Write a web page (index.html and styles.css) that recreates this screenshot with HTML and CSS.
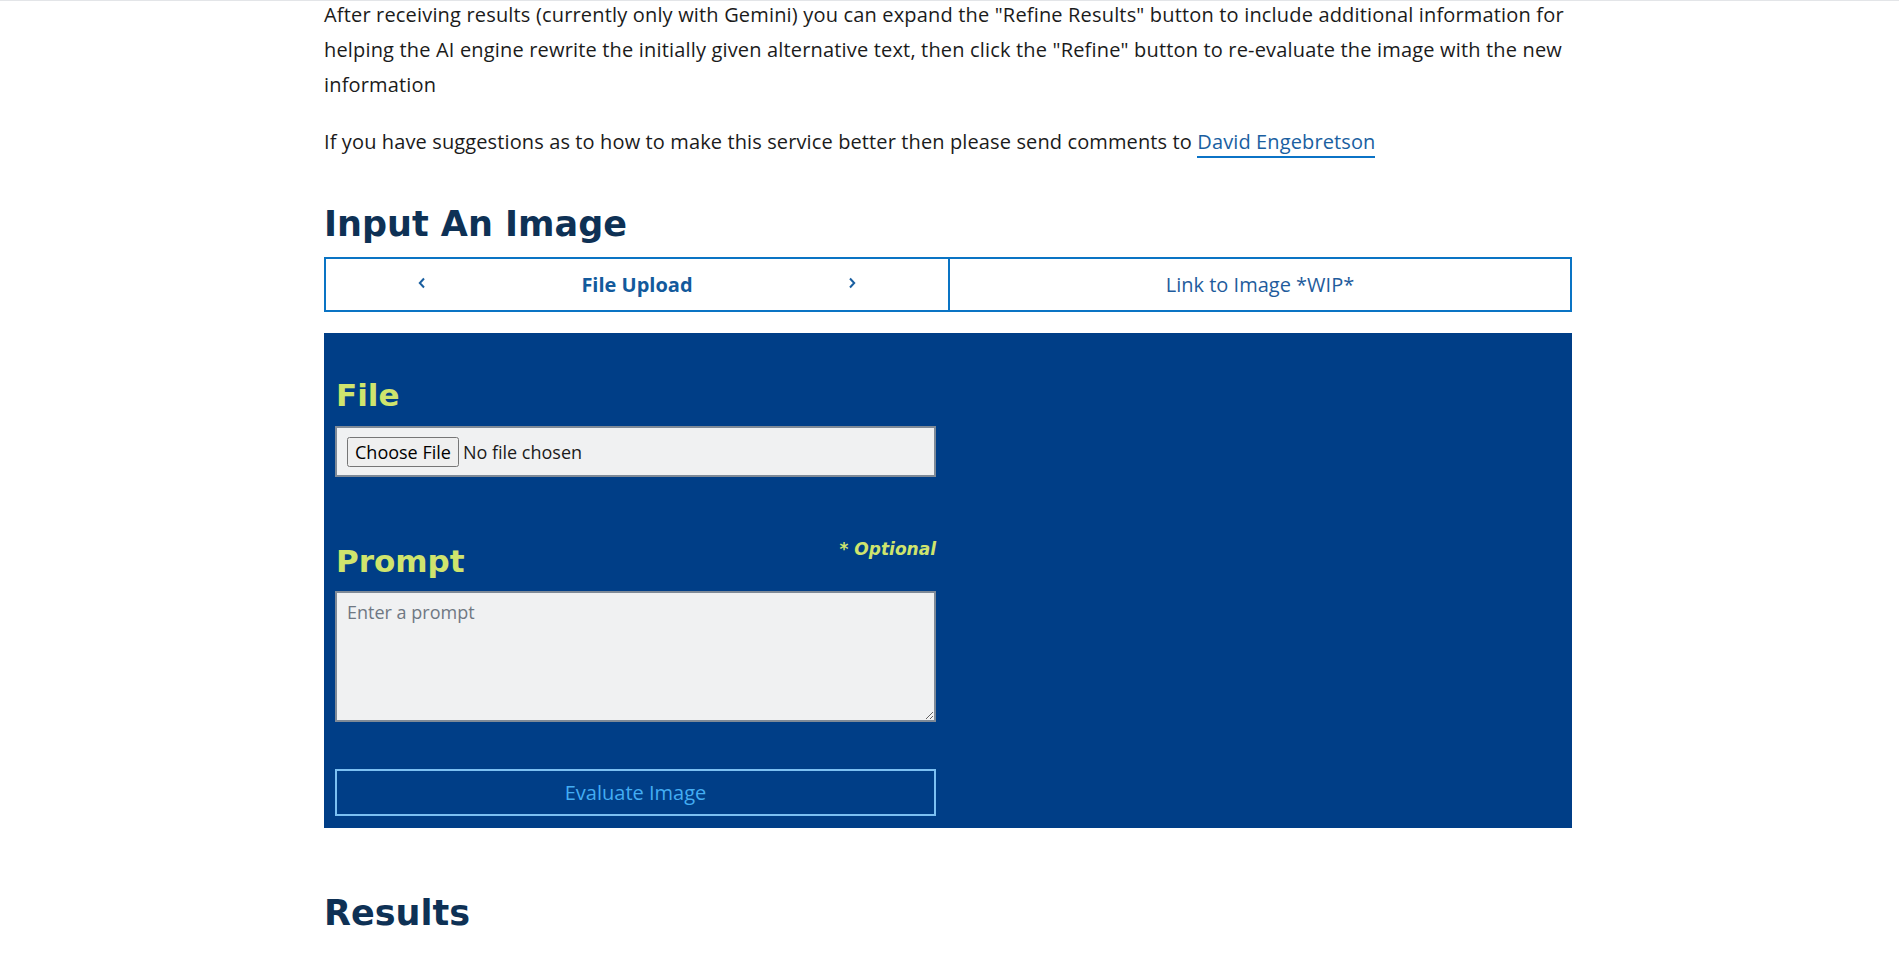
FILE: index.html
```html
<!DOCTYPE html>
<html lang="en">
<head>
<meta charset="utf-8">
<title>Alt Text Generator</title>
<link rel="stylesheet" href="styles.css">
</head>
<body>
<div class="topline"></div>
<main class="page">
  <p class="intro">After receiving results (currently only with Gemini) you can expand the "Refine Results" button to include additional information for helping the AI engine rewrite the initially given alternative text, then click the "Refine" button to re-evaluate the image with the new information</p>
  <p class="intro second">If you have suggestions as to how to make this service better then please send comments to <a class="mail" href="#">David Engebretson</a></p>

  <h2 class="section-title">Input An Image</h2>
  <div class="tabs">
    <button class="tab active">
      <svg class="chev" viewBox="0 0 8 12" width="8" height="12"><path d="M6 1.5 1.8 6 6 10.5" fill="none" stroke="currentColor" stroke-width="2"/></svg>
      <span>File Upload</span>
      <svg class="chev" viewBox="0 0 8 12" width="8" height="12"><path d="M2 1.5 6.2 6 2 10.5" fill="none" stroke="currentColor" stroke-width="2"/></svg>
    </button>
    <button class="tab">Link to Image *WIP*</button>
  </div>

  <section class="panel">
    <form class="form">
      <h3 class="field-title file-title">File</h3>
      <input class="file-input" type="file">
      <div class="prompt-head">
        <h3 class="field-title">Prompt</h3>
        <span class="optional">* Optional</span>
      </div>
      <textarea class="prompt" placeholder="Enter a prompt"></textarea>
      <button type="button" class="evaluate">Evaluate Image</button>
    </form>
    <div class="panel-right"></div>
  </section>

  <h2 class="section-title results">Results</h2>
</main>
</body>
</html>
```

FILE: styles.css
```css
html, body {
  margin: 0;
  padding: 0;
  background: #ffffff;
  overflow: hidden;
}
body {
  font-family: "Open Sans", "Noto Sans", sans-serif;
  color: #1b1b1b;
}
.topline {
  height: 1px;
  background: #e3e5e8;
}
.page {
  width: 1248px;
  margin-left: 324px;
}
.intro {
  margin: -4px 0 0;
  font-size: 20px;
  line-height: 35px;
  letter-spacing: 0.17px;
}
.intro.second {
  margin-top: 22px;
  letter-spacing: 0.12px;
}
.mail {
  color: #1a5fa1;
  text-decoration: none;
  border-bottom: 2px solid #0b73c6;
  padding-bottom: 1px;
}
.section-title {
  font-family: "DejaVu Sans", "Inter", sans-serif;
  font-weight: 700;
  font-size: 35px;
  line-height: 40px;
  color: #0e3155;
  margin: 45px 0 13px;
}
.tabs {
  display: grid;
  grid-template-columns: 1fr 1fr;
  border: 2px solid #0a74c4;
  height: 51px;
}
.tab {
  background: #ffffff;
  border: none;
  font-family: "Open Sans", "Noto Sans", sans-serif;
  font-size: 20px;
  color: #1f5c9c;
  padding: 0;
}
.tab + .tab {
  border-left: 2px solid #0a74c4;
}
.tab.active {
  display: flex;
  align-items: center;
  justify-content: space-between;
  padding: 0 92px 0 92px;
  font-weight: 700;
  color: #135a9c;
}
.chev {
  color: #1a5fa0;
  margin-top: -4px;
}
.panel {
  margin-top: 21px;
  background: #003e87;
  display: grid;
  grid-template-columns: 624px 1fr;
  padding: 44px 0 12px 11px;
}
.form {
  display: flex;
  flex-direction: column;
  width: 601px;
}
.field-title {
  font-family: "DejaVu Sans", "Inter", sans-serif;
  font-weight: 700;
  font-size: 31px;
  line-height: 36px;
  color: #cfe46d;
  margin: 0 0 13px 1px;
}
.file-input {
  box-sizing: border-box;
  height: 51px;
  background: #f0f1f2;
  border: 2px solid #7f8a97;
  padding: 9px 10px;
  font-family: "Open Sans", "Noto Sans", sans-serif;
  font-size: 18px;
  color: #1b1b1b;
}
.file-input::file-selector-button {
  font-family: "Open Sans", "Noto Sans", sans-serif;
  font-size: 18px;
  margin-right: 4px;
}
.prompt-head {
  display: flex;
  justify-content: space-between;
  align-items: flex-end;
  margin-top: 62px;
}
.prompt-head .field-title {
  margin-bottom: 12px;
}
.optional {
  font-family: "DejaVu Sans", "Inter", sans-serif;
  font-style: italic;
  font-weight: 700;
  font-size: 17px;
  line-height: 20px;
  color: #cfe46d;
  margin-bottom: 32px;
}
.prompt {
  box-sizing: border-box;
  height: 131px;
  background: #f0f1f2;
  border: 2px solid #7f8a97;
  padding: 7px 10px;
  font-family: "Open Sans", "Noto Sans", sans-serif;
  font-size: 18px;
}
.prompt::placeholder {
  color: #6f7883;
}
.evaluate {
  margin-top: 47px;
  height: 47px;
  background: transparent;
  border: 2px solid #7cc0f2;
  color: #43adf3;
  font-family: "Open Sans", "Noto Sans", sans-serif;
  font-size: 20px;
}
.results {
  margin-top: 65px;
}
```
